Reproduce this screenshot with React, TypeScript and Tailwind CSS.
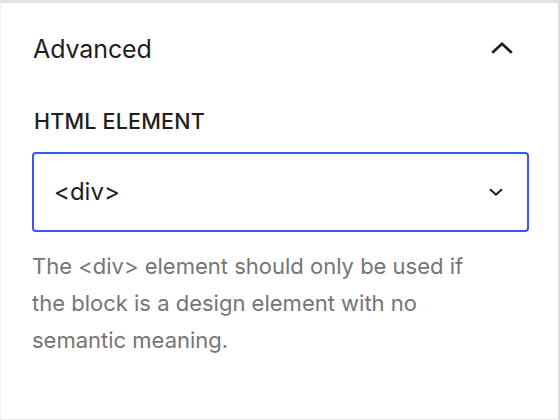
import React from 'react';

const ChevronUp = () => (
  <svg width="24" height="24" viewBox="0 0 24 24" className="w-[36px] h-[36px]" fill="none">
    <path d="M5.5 14.5 12 8.5l6.5 6" stroke="#1e1e1e" strokeWidth="1.8" />
  </svg>
);

const ChevronDown = () => (
  <svg width="24" height="24" viewBox="0 0 24 24" className="w-[26px] h-[26px]" fill="none">
    <path d="M6.5 9.5 12 14.5l5.5-5" stroke="#1e1e1e" strokeWidth="1.9" />
  </svg>
);

export default function App() {
  return (
    <div
      className="w-[560px] h-[420px] bg-white border-t-[3px] border-t-[#e2e2e2] border-r-[2px] border-r-[#dcdcdc] border-b border-b-[#ececec] border-l border-l-[#f0f0f0] overflow-hidden"
      style={{ fontFamily: 'Inter, "Noto Sans", sans-serif' }}
    >
      <div className="flex items-center justify-between pl-[32px] pr-[38px] pt-[27px] h-[64px]">
        <span className="text-[25px] leading-[32px] text-[#1e1e1e] font-normal tracking-[-0.1px]">Advanced</span>
        <ChevronUp />
      </div>
      <div className="px-[31px]">
        <div className="mt-[40px] text-[21.5px] leading-[28px] font-medium text-[#1e1e1e] uppercase tracking-[0.2px] pl-[2px]">
          HTML Element
        </div>
        <div className="mt-[17px] h-[80px] w-[497px] rounded-[4px] border-2 border-[#3858e9] flex items-center justify-between pl-[20px] pr-[18px]">
          <span className="text-[24px] text-[#1e1e1e]">&lt;div&gt;</span>
          <ChevronDown />
        </div>
        <p className="mt-[16px] text-[22px] leading-[37px] text-[#757575] pr-[40px]">
          The &lt;div&gt; element should only be used if the block is a design element with no semantic meaning.
        </p>
      </div>
    </div>
  );
}
